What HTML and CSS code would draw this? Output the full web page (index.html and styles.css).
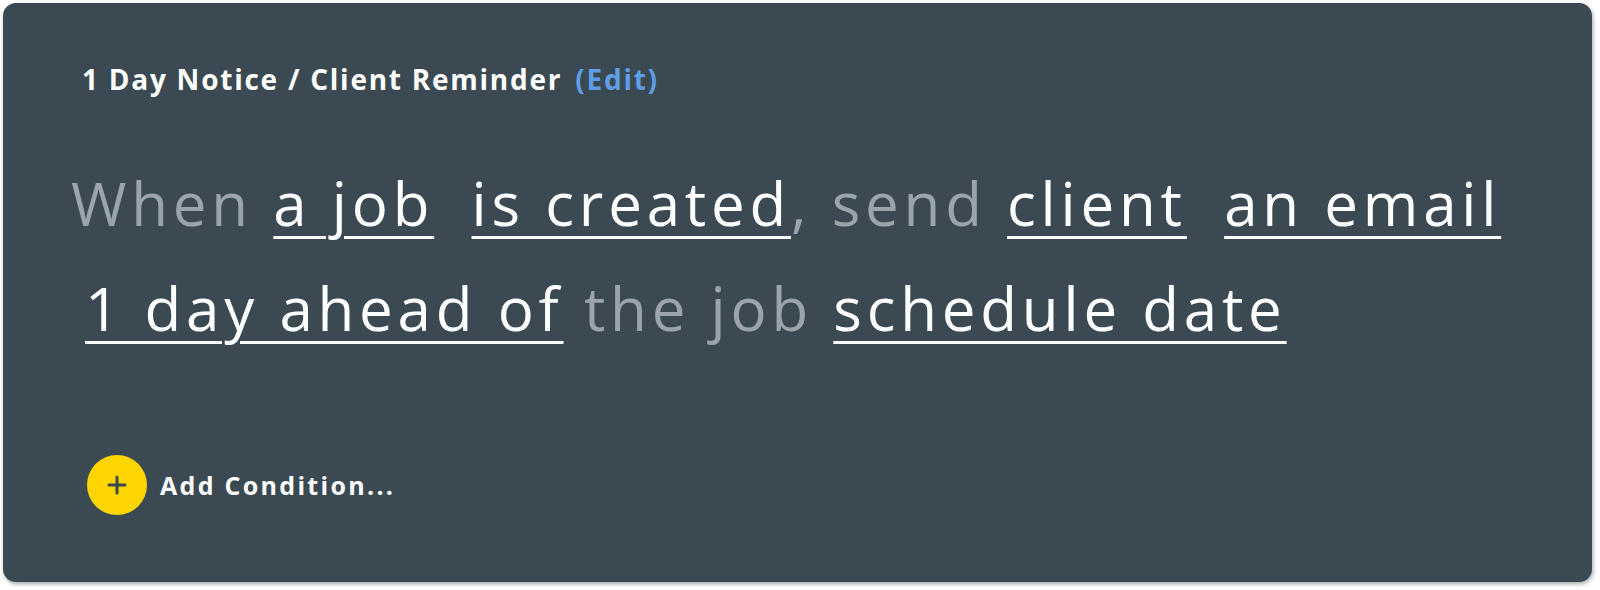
FILE: index.html
```html
<!DOCTYPE html>
<html lang="en">
<head>
	<meta charset="UTF-8">
	<meta name="viewport" content="width=device-width, initial-scale=1.0">
	<title>Automation rule</title>
	<link rel="stylesheet" href="styles.css">
</head>
<body>
	<div class="card">
		<h2 class="card__title">1 Day Notice / Client Reminder <a class="card__edit" href="#">(Edit)</a></h2>

		<!-- sentence built from the rule parts -->
		<p class="rule">
			<span class="rule__line"><span class="muted">When</span> <span class="token">a job</span> <span class="token">is created</span><span class="muted">, send</span> <span class="token">client</span> <span class="token">an email</span></span>
			<span class="rule__line"><span class="token">1 day ahead of</span> <span class="muted">the job</span> <span class="token">schedule date</span></span>
		</p>

		<button class="add-btn" type="button">
			<span class="add-btn__icon">
				<svg width="22" height="22" viewBox="0 0 22 22">
					<path d="M11 3v16M3 11h16" stroke="#3b4a52" stroke-width="3" stroke-linecap="round" />
				</svg>
			</span>
			Add Condition...
		</button>
	</div>
</body>
</html>
```

FILE: styles.css
```css
*,
*::before,
*::after {
	box-sizing: border-box;
	margin: 0;
	padding: 0;
	border: none;
}

body,
html {
	height: 100%;
}

body {
	font-family: "Open Sans", Arial, sans-serif;
	background-color: #fff;
	padding: 3px 8px 8px 3px;
}

a {
	text-decoration: none;
	color: inherit;
}

.card {
	height: 579px;
	background-color: #3b4a52;
	border-radius: 13px;
	box-shadow: 1px 2px 4px rgba(0, 0, 0, 0.35);
	padding: 60px 68px 0 68px;
	color: #fff;
}

.card__title {
	font-size: 28px;
	font-weight: 700;
	line-height: 1.2;
	letter-spacing: 1.75px;
	padding-left: 11px;
	margin-bottom: 54px;
}

.card__edit {
	color: #5f9de6;
	margin-left: 4px;
}

.rule {
	font-size: 60px;
	line-height: 105px;
	font-weight: 400;
	letter-spacing: 4.8px;
}

.rule__line {
	display: block;
}

.rule__line + .rule__line {
	padding-left: 14px;
}

.muted {
	color: #9ba4aa;
}

.token {
	text-decoration: underline;
	text-decoration-thickness: 3px;
	text-underline-offset: 10px;
}

.token + .token {
	margin-left: 17px;
}

.add-btn {
	display: flex;
	align-items: center;
	gap: 13px;
	margin-top: 94px;
	margin-left: 16px;
	background: none;
	color: #fff;
	font-family: inherit;
	font-size: 25px;
	font-weight: 700;
	letter-spacing: 2.3px;
	cursor: pointer;
}

.add-btn__icon {
	width: 60px;
	height: 60px;
	border-radius: 50%;
	background-color: #ffd500;
	display: flex;
	align-items: center;
	justify-content: center;
}
```
